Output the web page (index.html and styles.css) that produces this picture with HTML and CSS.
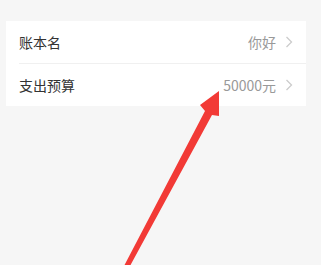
FILE: index.html
```html
<!DOCTYPE html>
<html lang="zh-CN">
<head>
    <meta charset="UTF-8">
    <meta name="viewport" content="width=device-width, initial-scale=1.0">
    <title>账本设置</title>
    <link rel="stylesheet" href="styles.css">
</head>
<body>
    <div class="page">
        <ul class="settings">
            <li class="row">
                <span class="label">账本名</span>
                <span class="value">你好</span>
                <svg class="chevron" width="8" height="12" viewBox="0 0 8 12">
                    <polyline points="1.5,1 6.5,6 1.5,11" fill="none" stroke="#cccccc" stroke-width="1.3"/>
                </svg>
            </li>
            <li class="row">
                <span class="label">支出预算</span>
                <span class="value">50000元</span>
                <svg class="chevron" width="8" height="12" viewBox="0 0 8 12">
                    <polyline points="1.5,1 6.5,6 1.5,11" fill="none" stroke="#cccccc" stroke-width="1.3"/>
                </svg>
            </li>
        </ul>
    </div>

    <!-- annotation arrow over the screenshot -->
    <svg class="arrow" width="321" height="265" viewBox="0 0 321 265">
        <polygon points="219,91 200,105 205,111 124,266 130,266 212,115 219,116" fill="#f23a36"/>
    </svg>
</body>
</html>
```

FILE: styles.css
```css
body {
    margin: 0;
    background-color: #f6f6f6;
    font-family: "Noto Sans CJK SC", "Noto Sans", sans-serif;
    overflow: hidden;
}

.page {
    height: 265px;
    padding-top: 21px;
    box-sizing: border-box;
}

.settings {
    list-style-type: none;
    margin: 0 15px 0 6px;
    padding: 0 0 0 13px;
    background-color: white;
}

.row {
    display: flex;
    align-items: center;
    height: 42px;
    padding-right: 13px;
}

.row + .row {
    border-top: 1px solid #f0f0f0;
}

.label {
    flex-grow: 1;
    font-size: 14px;
    color: #333;
}

.value {
    font-size: 14px;
    color: #999;
    margin-right: 9px;
}

.chevron {
    display: block;
}

.arrow {
    position: absolute;
    top: 0;
    left: 0;
    pointer-events: none;
}
```
